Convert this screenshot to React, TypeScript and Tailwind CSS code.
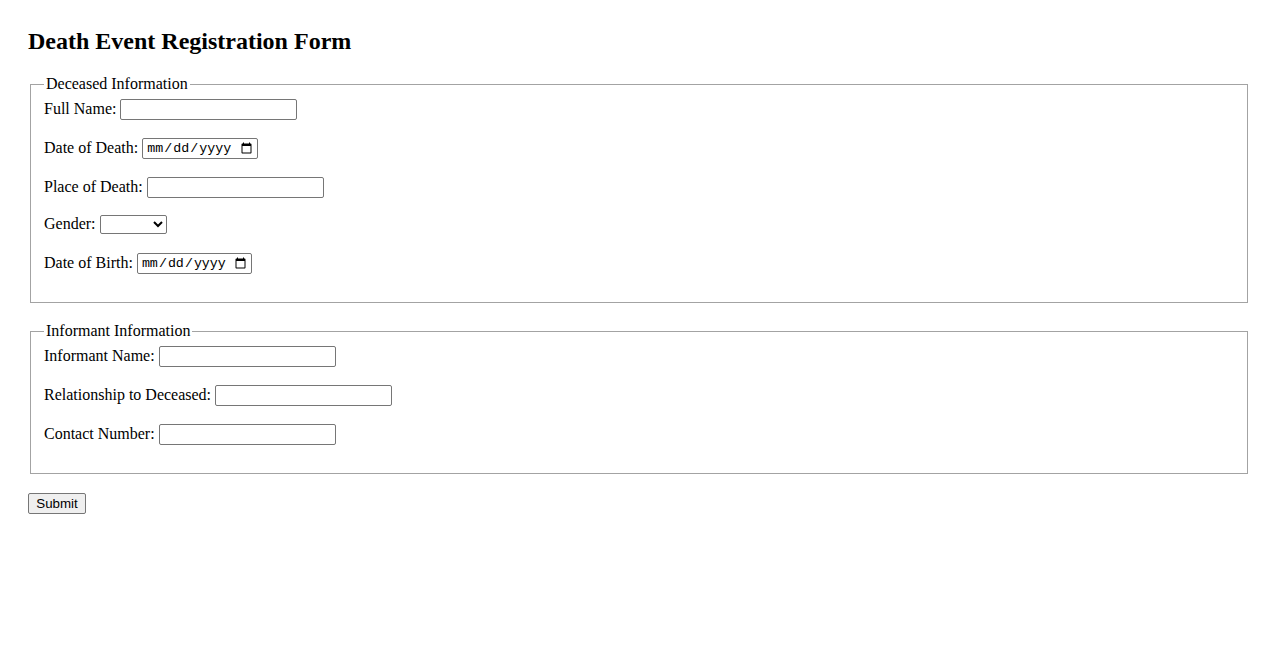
import React from "react";

const textInput =
  "w-[177px] h-[21px] px-[2px] border border-[#767676] rounded-[2px] bg-white font-['Liberation_Sans'] text-[13.33px] text-black outline-none";
const dateInput =
  "w-[116px] h-[21px] pl-[3px] pr-[2px] border border-[#767676] rounded-[2px] bg-white font-['Liberation_Mono'] text-[13.33px] text-black outline-none";
// 1px grey line, extra padding keeps the box where a 2px groove border would put it
const fieldsetCls =
  "mx-[2px] border border-[#a3a3a3] px-[13px] pt-[5.6px] pb-[10px]";
const legendCls = "px-[2px] leading-[18.4px]";

function Row({
  label,
  htmlFor,
  children,
  className,
}: {
  label: string;
  htmlFor: string;
  children: React.ReactNode;
  className?: string;
}) {
  return (
    <div className={"flex items-center gap-[4px] " + (className ?? "h-[21px] mb-[18px]")}>
      <label htmlFor={htmlFor} className="leading-[18.4px]">
        {label}
      </label>
      {children}
    </div>
  );
}

export default function App() {
  return (
    <div className="min-h-screen bg-white px-[28px] pt-[27px] font-['Liberation_Serif',serif] text-[16px] text-black">
      <h2 className="text-[24px] font-bold leading-[28px] mb-[20px]">
        Death Event Registration Form
      </h2>

      <form onSubmit={(e) => e.preventDefault()}>
        <fieldset className={fieldsetCls + " mb-[19px]"}>
          <legend className={legendCls}>Deceased Information</legend>
          <Row label="Full Name:" htmlFor="fullName">
            <input id="fullName" type="text" className={textInput} />
          </Row>
          <Row label="Date of Death:" htmlFor="dateOfDeath">
            <input id="dateOfDeath" type="date" className={dateInput} />
          </Row>
          <Row label="Place of Death:" htmlFor="placeOfDeath" className="h-[21px] mb-[17px]">
            <input id="placeOfDeath" type="text" className={textInput} />
          </Row>
          <Row label="Gender:" htmlFor="gender" className="h-[19px] mb-[19px]">
            <select
              id="gender"
              className="w-[67px] h-[19px] border border-[#767676] rounded-[2px] bg-white font-['Liberation_Sans'] text-[13.33px]"
            >
              <option value=""></option>
              <option value="male">Male</option>
              <option value="female">Female</option>
              <option value="other">Other</option>
            </select>
          </Row>
          <Row label="Date of Birth:" htmlFor="dateOfBirth">
            <input id="dateOfBirth" type="date" className={dateInput + " !w-[115px]"} />
          </Row>
        </fieldset>

        <fieldset className={fieldsetCls + " mb-[19px]"}>
          <legend className={legendCls}>Informant Information</legend>
          <Row label="Informant Name:" htmlFor="informantName">
            <input id="informantName" type="text" className={textInput} />
          </Row>
          <Row label="Relationship to Deceased:" htmlFor="relationship">
            <input id="relationship" type="text" className={textInput} />
          </Row>
          <Row label="Contact Number:" htmlFor="contactNumber">
            <input id="contactNumber" type="tel" className={textInput} />
          </Row>
        </fieldset>

        <div className="flex">
          <button
            type="submit"
            className="w-[58px] h-[21px] border border-[#767676] rounded-[2px] bg-[#efefef] font-['Liberation_Sans'] text-[13.33px] leading-none text-black"
          >
            Submit
          </button>
        </div>
      </form>
    </div>
  );
}
